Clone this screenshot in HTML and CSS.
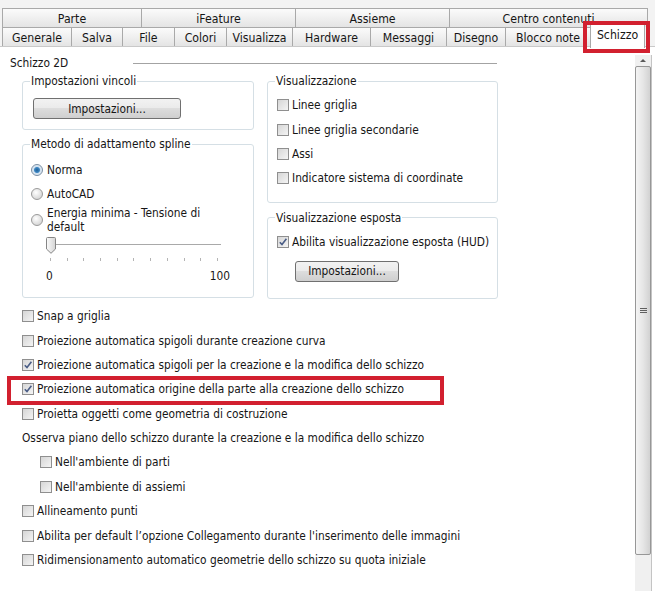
FILE: index.html
```html
<!DOCTYPE html>
<html lang="it">
<head>
    <meta charset="UTF-8" />
    <title>Opzioni applicazione - Schizzo</title>
    <link rel="stylesheet" href="styles.css">
</head>
<body>
    <div class="tabstrip">
        <div class="tabrow top">
            <div class="tab">Parte</div>
            <div class="tab">iFeature</div>
            <div class="tab">Assieme</div>
            <div class="tab">Centro contenuti</div>
        </div>
        <div class="tabrow bottom">
            <div class="tab">Generale</div>
            <div class="tab">Salva</div>
            <div class="tab">File</div>
            <div class="tab">Colori</div>
            <div class="tab">Visualizza</div>
            <div class="tab">Hardware</div>
            <div class="tab">Messaggi</div>
            <div class="tab">Disegno</div>
            <div class="tab">Blocco note</div>
            <div class="tab active">Schizzo</div>
        </div>
    </div>

    <div class="panel">
        <div class="page">
            <div class="section-title">
                <span>Schizzo 2D</span>
                <span class="rule"></span>
            </div>

            <div class="columns">
                <div class="col left">
                    <fieldset class="group g-vincoli">
                        <legend>Impostazioni vincoli</legend>
                        <button class="btn btn-wide">Impostazioni...</button>
                    </fieldset>

                    <fieldset class="group g-spline">
                        <legend>Metodo di adattamento spline</legend>
                        <div class="opt"><span class="radio on"></span><span>Norma</span></div>
                        <div class="opt"><span class="radio"></span><span>AutoCAD</span></div>
                        <div class="opt two"><span class="radio"></span><span>Energia minima - Tensione di<br>default</span></div>
                        <div class="slider">
                            <div class="track">
                                <svg class="thumb" width="10" height="17" viewBox="0 0 10 17">
                                    <defs>
                                        <linearGradient id="tg" x1="0" y1="0" x2="1" y2="0">
                                            <stop offset="0" stop-color="#fbfbfb"/>
                                            <stop offset="1" stop-color="#d4d4d4"/>
                                        </linearGradient>
                                    </defs>
                                    <path d="M0.5 1.5 Q0.5 0.5 1.5 0.5 H8.5 Q9.5 0.5 9.5 1.5 V12 L5 16.3 L0.5 12 Z" fill="url(#tg)" stroke="#858585"/>
                                </svg>
                            </div>
                            <div class="ticks">
                                <i></i><i></i><i></i><i></i><i></i><i></i><i></i><i></i><i></i><i></i><i></i>
                            </div>
                            <div class="scale"><span>0</span><span>100</span></div>
                        </div>
                    </fieldset>
                </div>

                <div class="col right">
                    <fieldset class="group g-vis">
                        <legend>Visualizzazione</legend>
                        <div class="row"><span class="cb"></span>Linee griglia</div>
                        <div class="row"><span class="cb"></span>Linee griglia secondarie</div>
                        <div class="row"><span class="cb"></span>Assi</div>
                        <div class="row"><span class="cb"></span>Indicatore sistema di coordinate</div>
                    </fieldset>

                    <fieldset class="group g-hud">
                        <legend>Visualizzazione esposta</legend>
                        <div class="row"><span class="cb on"><svg width="10" height="10" viewBox="0 0 10 10"><path d="M1.8 5.2 L4 7.6 L8.4 1.8" fill="none" stroke="#4a5d86" stroke-width="1.6"/></svg></span>Abilita visualizzazione esposta (HUD)</div>
                        <button class="btn btn-small">Impostazioni...</button>
                    </fieldset>
                </div>
            </div>

            <div class="list">
                <div class="row"><span class="cb"></span>Snap a griglia</div>
                <div class="row"><span class="cb"></span>Proiezione automatica spigoli durante creazione curva</div>
                <div class="row"><span class="cb on"><svg width="10" height="10" viewBox="0 0 10 10"><path d="M1.8 5.2 L4 7.6 L8.4 1.8" fill="none" stroke="#4a5d86" stroke-width="1.6"/></svg></span>Proiezione automatica spigoli per la creazione e la modifica dello schizzo</div>
                <div class="row marked"><span class="cb on"><svg width="10" height="10" viewBox="0 0 10 10"><path d="M1.8 5.2 L4 7.6 L8.4 1.8" fill="none" stroke="#4a5d86" stroke-width="1.6"/></svg></span>Proiezione automatica origine della parte alla creazione dello schizzo</div>
                <div class="row"><span class="cb"></span>Proietta oggetti come geometria di costruzione</div>
                <div class="row">Osserva piano dello schizzo durante la creazione e la modifica dello schizzo</div>
                <div class="row indent"><span class="cb"></span>Nell'ambiente di parti</div>
                <div class="row indent"><span class="cb"></span>Nell'ambiente di assiemi</div>
                <div class="row"><span class="cb"></span>Allineamento punti</div>
                <div class="row"><span class="cb"></span>Abilita per default l’opzione Collegamento durante l'inserimento delle immagini</div>
                <div class="row"><span class="cb"></span>Ridimensionamento automatico geometrie dello schizzo su quota iniziale</div>
            </div>
        </div>

        <div class="scrollbar">
            <div class="arrow"></div>
            <div class="thumb-bar"><span class="grip"></span></div>
            <div class="rest"></div>
        </div>
    </div>
</body>
</html>
```

FILE: styles.css
```css
body {
    margin: 0;
    width: 655px;
    height: 591px;
    overflow: hidden;
    background: #fff;
    font-family: "DejaVu Sans Condensed", "DejaVu Sans", sans-serif;
    font-size: 11.8px;
    color: #161616;
}

/* tabs */
.tabstrip {
    background: #f3f3f3;
    padding-top: 8px;
}

.tabrow {
    display: grid;
    margin-left: 2px;
    align-items: start;
}

.tabrow.top {
    grid-template-columns: 140px 154px 154px 198px;
}

.tabrow.bottom {
    grid-template-columns: 70px 51px 52px 52px 66px 78px 76px 59px 85px 54px;
    height: 19px;
}

.tab {
    box-sizing: border-box;
    height: 19px;
    border: 1px solid #a9a9a9;
    border-left: none;
    border-bottom: none;
    background: linear-gradient(#fbfbfb, #e4e4e4);
    text-align: center;
    line-height: 20px;
    font-size: 12.2px;
    white-space: nowrap;
}

.tab:first-child {
    border-left: 1px solid #a9a9a9;
}

.tab.active {
    position: relative;
    z-index: 1;
    height: 24px;
    margin-top: -3px;
    margin-left: -1px;
    border-left: 1px solid #a9a9a9;
    background: #fff;
    line-height: 21px;
}

.tab.active::after {
    content: "";
    position: absolute;
    left: -8px;
    top: -4px;
    width: 67px;
    height: 32px;
    box-sizing: border-box;
    border: 4px solid #d2202f;
}

/* panel */
.panel {
    display: flex;
    height: 544px;
    border-top: 1px solid #c9c9c9;
}

.page {
    flex: 1;
    padding-left: 10px;
}

.section-title {
    display: flex;
    align-items: center;
    width: 487px;
    margin-top: 9px;
    line-height: 14px;
}

.section-title .rule {
    width: 364px;
    margin-left: auto;
    border-top: 1px solid #a3a3a3;
}

.columns {
    display: flex;
    gap: 13px;
    margin: 4px 0 0 12px;
}

.col.left {
    width: 232px;
}

.col.right {
    width: 231px;
}

.group {
    margin: 0;
    min-width: 0;
    border: 1px solid #d5dfe5;
    border-radius: 3px;
    padding: 0 9px 10px;
}

.group legend {
    padding: 0 1px;
    margin-left: -2px;
    line-height: 14px;
}

.g-spline {
    margin-top: 7px;
    padding-bottom: 14px;
}

.g-vis {
    padding-bottom: 11px;
}

.g-vis .row:first-of-type {
    margin-top: 5px;
}

.g-hud {
    margin-top: 8px;
    padding-bottom: 16px;
}

.g-hud .row {
    margin-top: 5px;
}

/* buttons */
.btn {
    display: block;
    box-sizing: border-box;
    height: 21px;
    padding: 0;
    border: 1px solid #707070;
    border-radius: 3px;
    background: linear-gradient(#f2f2f2 0%, #ebebeb 45%, #dddddd 50%, #cfcfcf 100%);
    font: inherit;
    color: #161616;
}

.btn-wide {
    width: 148px;
    margin: 10px 0 0 1px;
}

.btn-small {
    width: 104px;
    margin: 7px 0 0 18px;
}

/* radio options */
.opt {
    display: flex;
    align-items: center;
    gap: 4px;
    height: 24px;
    margin-left: -1px;
    line-height: 14px;
}

.opt:first-of-type {
    margin-top: 7px;
}

.opt.two {
    height: 28px;
}

.radio {
    flex: none;
    width: 12px;
    height: 12px;
    box-sizing: border-box;
    border: 1px solid #9a9a9a;
    border-radius: 50%;
    background: radial-gradient(circle at 40% 35%, #ffffff, #d9d9d9 70%);
}

.radio.on {
    border-color: #7a8ea3;
    background: radial-gradient(circle at 50% 50%, #1d5f96 0, #3d86c2 2.5px, #cfe0ef 3.5px, #e8eef4 6px);
}

/* slider */
.slider {
    width: 184px;
    margin: 3px 0 0 14px;
}

.track {
    height: 17px;
    background:
        linear-gradient(#a9a9a9, #a9a9a9) no-repeat 1px 7px / 174px 1px,
        linear-gradient(#ffffff, #ffffff) no-repeat 1px 8px / 174px 1px;
}

.thumb {
    display: block;
}

.ticks {
    display: flex;
    justify-content: space-between;
    width: 168px;
    margin: 4px 0 0 4px;
}

.ticks i {
    width: 1px;
    height: 3px;
    background: #b4b4b4;
}

.scale {
    display: flex;
    justify-content: space-between;
    margin-top: 8px;
    line-height: 14px;
}

/* checkbox rows */
.row {
    display: flex;
    align-items: center;
    height: 24.4px;
    white-space: nowrap;
}

.cb {
    flex: none;
    display: flex;
    align-items: center;
    justify-content: center;
    width: 12px;
    height: 12px;
    box-sizing: border-box;
    margin-right: 3px;
    border: 1px solid #8f8f8f;
    background: linear-gradient(135deg, #d6d6d6, #f4f4f4);
}

.cb svg {
    display: block;
}

.list {
    margin: 5px 0 0 12px;
}

.list .indent {
    margin-left: 18px;
}

.row.marked {
    position: relative;
}

.row.marked::after {
    content: "";
    position: absolute;
    left: -15px;
    top: -1px;
    width: 437px;
    height: 29px;
    box-sizing: border-box;
    border: 4px solid #d2202f;
}

/* scrollbar */
.scrollbar {
    width: 16px;
    margin: 8px 3px 0 0;
    display: flex;
    flex-direction: column;
    background: #f0f0f0;
    border-right: 1px solid #c4c4c4;
}

.arrow {
    height: 11px;
    display: flex;
    justify-content: center;
    align-items: center;
}

.arrow::before {
    content: "";
    border-left: 3px solid transparent;
    border-right: 3px solid transparent;
    border-bottom: 3px solid #5a5a5a;
}

.thumb-bar {
    height: 489px;
    box-sizing: border-box;
    border: 1px solid #979797;
    border-radius: 2px;
    background: linear-gradient(90deg, #f4f4f4, #e6e6e6 50%, #d2d2d2);
    display: flex;
    align-items: center;
    justify-content: center;
}

.grip {
    width: 7px;
    height: 5px;
    background: repeating-linear-gradient(#5f5f5f 0 1px, transparent 1px 2px);
}

.rest {
    flex: 1;
}
```
